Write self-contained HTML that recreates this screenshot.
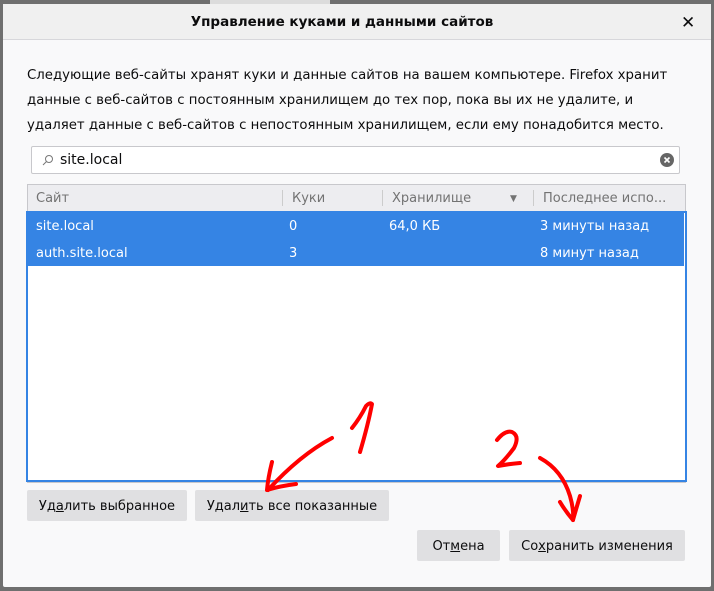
<!DOCTYPE html>
<html><head><meta charset="utf-8"><style>
body{margin:0;width:714px;height:591px;background:#6f6f6f;position:relative;overflow:hidden;font-family:"DejaVu Sans","Liberation Sans",sans-serif;font-size:13px;color:#0c0c0d}
.a{position:absolute}
.dlg{left:3px;top:4px;width:708px;height:583px;background:#f9f9fa;border-radius:2px}
.hdr{left:0;top:0;width:708px;height:35px;background:#f0f0f0;border-bottom:1px solid #d7d7db}
.btn{background:#e0e0e2;border-radius:2px;height:31px;line-height:33px;text-align:center;font-size:13px}
.row{left:24px;width:657px;height:27px;line-height:29px;background:#3584e4;color:#fff}
</style></head><body>
<div class="a" style="left:210px;top:0;width:120px;height:4px;background:#dcdcdc"></div>
<div class="a dlg">
 <div class="a hdr"><div class="a" style="left:-15px;width:708px;top:0;line-height:36px;text-align:center;font-weight:bold;font-size:13.5px">Управление куками и данными сайтов</div>
 <div class="a" style="left:678px;top:9px;font-size:17px">✕</div></div>
 <div class="a" style="left:24px;top:59px;line-height:25px;font-size:13.3px;width:690px">Следующие веб-сайты хранят куки и данные сайтов на вашем компьютере. Firefox хранит<br>данные с веб-сайтов с постоянным хранилищем до тех пор, пока вы их не удалите, и<br>удаляет данные с веб-сайтов с непостоянным хранилищем, если ему понадобится место.</div>
 <div class="a" style="left:28px;top:142px;width:647px;height:26px;background:#fff;border:1px solid #c8c8cc;border-radius:2px">
  <svg class="a" style="left:10px;top:7px" width="12" height="12"><circle cx="7" cy="5" r="3.5" fill="none" stroke="#777" stroke-width="1"/><line x1="4.5" y1="7.5" x2="1" y2="11" stroke="#777"/></svg>
  <div class="a" style="left:28px;top:0;line-height:26px;font-size:14px">site.local</div>
  <svg class="a" style="left:628px;top:6px" width="14" height="14"><circle cx="7" cy="7" r="7" fill="#666"/><path d="M4.5 4.5L9.5 9.5M9.5 4.5L4.5 9.5" stroke="#fff" stroke-width="1.6"/></svg>
 </div>
 <div class="a" style="left:24px;top:180px;width:657px;height:297px;border:1px solid #c8c8cc;background:#fff"></div>
 <div class="a" style="left:25px;top:181px;width:657px;height:26px;background:#ededf0;color:#737373;line-height:28px">
  <span class="a" style="left:8px">Сайт</span><span class="a" style="left:254px;top:5px;height:16px;border-left:1px solid #ccc"></span>
  <span class="a" style="left:264px">Куки</span><span class="a" style="left:354px;top:5px;height:16px;border-left:1px solid #ccc"></span>
  <span class="a" style="left:364px">Хранилище</span><span class="a" style="left:482px;font-size:9px">▼</span><span class="a" style="left:505px;top:5px;height:16px;border-left:1px solid #ccc"></span>
  <span class="a" style="left:515px">Последнее испо...</span>
 </div>
 <div class="a" style="left:23px;top:207px;width:661px;height:271px;border:2px solid #3584e4;box-sizing:border-box"></div>
 <div class="a row" style="top:208px"><span class="a" style="left:9px">site.local</span><span class="a" style="left:262px">0</span><span class="a" style="left:362px">64,0 КБ</span><span class="a" style="left:513px">3 минуты назад</span></div>
 <div class="a row" style="top:235px"><span class="a" style="left:9px">auth.site.local</span><span class="a" style="left:262px">3</span><span class="a" style="left:513px">8 минут назад</span></div>
 <div class="a btn" style="left:24px;top:486px;width:160px">Уд<u>а</u>лить выбранное</div>
 <div class="a btn" style="left:192px;top:486px;width:194px">Удал<u>и</u>ть все показанные</div>
 <div class="a btn" style="left:414px;top:526px;width:83px">От<u>м</u>ена</div>
 <div class="a btn" style="left:506px;top:526px;width:176px">Со<u>х</u>ранить изменения</div>
</div>
<svg class="a" style="left:0;top:0" width="714" height="591" fill="none" stroke="#f00" stroke-width="4" stroke-linecap="round" stroke-linejoin="round">
<path d="M352 428 Q360 418 366 406 Q370 402 372 404 Q368 425 360 452"/>
<path d="M332 438 Q300 455 268 490"/><path d="M272 462 Q268 478 267 490 Q280 486 296 484"/>
<path d="M497 440 Q505 430 512 432 Q520 436 514 448 Q505 460 498 466 Q508 464 520 463"/>
<path d="M540 458 Q562 470 570 496 Q574 510 573 520"/><path d="M560 502 Q566 512 573 520 Q577 506 580 496"/>
</svg>
</body></html>
